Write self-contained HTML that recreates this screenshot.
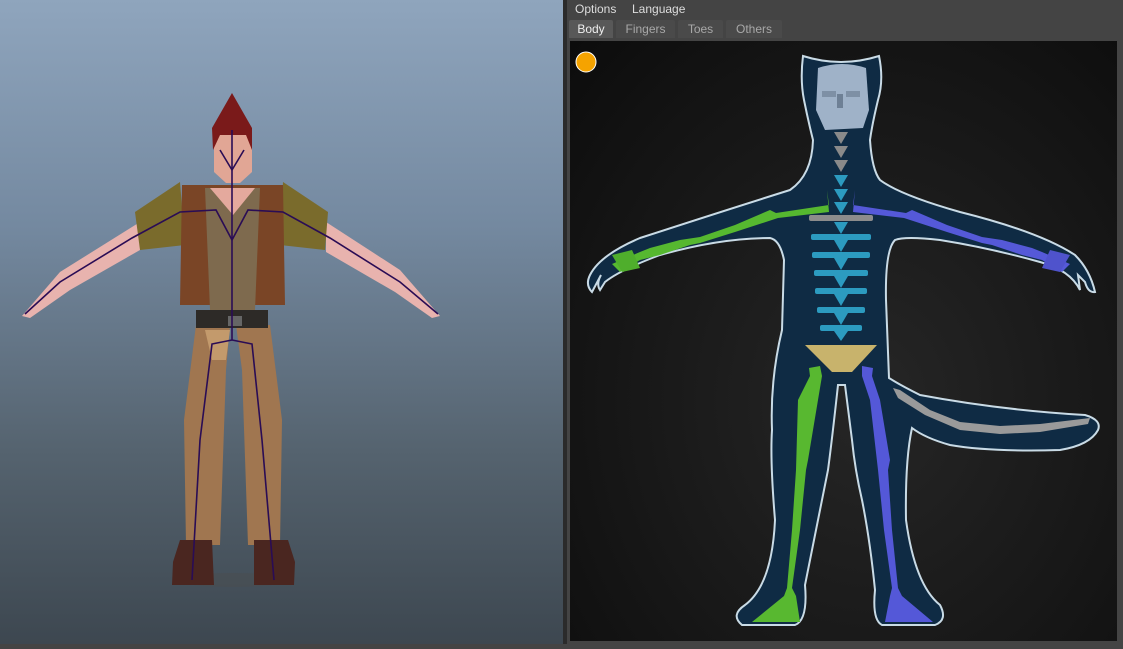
<!DOCTYPE html>
<html><head><style>
html,body{margin:0;padding:0;width:1123px;height:644px;overflow:hidden;background:#444;font-family:"Liberation Sans",sans-serif;}
.left{position:absolute;left:0;top:0;width:563px;height:644px;background:linear-gradient(#8fa5bd 0%,#7489a0 35%,#55636f 70%,#3d4750 100%);}
.div{position:absolute;left:563px;top:0;width:4px;height:644px;background:#2b2b2b;}
.right{position:absolute;left:567px;top:0;width:556px;height:644px;background:#444;}
.menu{position:absolute;left:0;top:0;width:556px;height:18px;background:#444;color:#ddd;font-size:12px;}
.menu span{position:absolute;top:2px}
.tabs{position:absolute;top:20px;left:0;height:18px;width:556px;}
.tab{position:absolute;top:0;height:18px;background:#4a4a4a;color:#a8a8a8;font-size:12px;line-height:18px;text-align:center;border-radius:2px 2px 0 0}
.canvas{position:absolute;left:3px;top:41px;width:547px;height:600px;background:radial-gradient(ellipse at 55% 60%,#262626,#141414 70%,#0c0c0c 100%);}
</style></head><body>
<div class="left">
<svg width="563" height="644" viewBox="0 0 563 644">
<ellipse cx="233" cy="580" rx="55" ry="7" fill="#4a4e52" opacity=".6"/>
<path d="M140 222 L60 272 L22 316 L30 318 L70 290 L140 250Z" fill="#e8b3ae"/>
<path d="M326 222 L400 270 L440 316 L432 318 L395 292 L326 252Z" fill="#e8b3ae"/>
<path d="M180 182 L135 212 L140 250 L185 245Z" fill="#7a6b2c"/>
<path d="M283 182 L328 212 L325 250 L280 245Z" fill="#7a6b2c"/>
<path d="M196 325 L230 325 L226 370 L220 545 L186 545 L184 420Z" fill="#a07650"/>
<path d="M236 325 L270 325 L282 420 L280 545 L248 545 L242 370Z" fill="#a07650"/>
<path d="M205 330 L230 330 L226 360 L212 360Z" fill="#c39a6c"/>
<path d="M180 540 L212 540 L214 585 L172 585 L173 562Z" fill="#4a2620"/>
<path d="M254 540 L288 540 L295 562 L294 585 L254 585Z" fill="#4a2620"/>
<path d="M182 185 L283 185 L285 305 L180 305Z" fill="#7a4526"/>
<path d="M205 188 L260 188 L255 310 L210 310Z" fill="#7e6a4e"/>
<path d="M210 188 L233 215 L255 188Z" fill="#e4a99d"/>
<rect x="196" y="310" width="72" height="18" fill="#2d2a27"/>
<rect x="228" y="316" width="14" height="10" fill="#666"/>
<path d="M214 130 L252 130 L252 172 L240 183 L226 183 L214 172Z" fill="#e1a695"/>
<path d="M232 93 L252 128 L252 150 L246 135 L220 135 L213 150 L212 128Z" fill="#7a1a1a"/>
<g stroke="#2a0c55" stroke-width="1.6" fill="none">
<path d="M232 130 L232 340"/><path d="M220 150 L232 170 L244 150"/>
<path d="M232 240 L216 210 L180 212 L132 238 L60 282 L25 314"/>
<path d="M232 240 L248 210 L283 212 L330 238 L400 282 L438 314"/>
<path d="M232 340 L212 344 L200 440 L192 580"/><path d="M232 340 L252 344 L262 440 L274 580"/>
</g>
</svg>
</div>
<div class="div"></div>
<div class="right">
<div class="menu"><span style="left:8px">Options</span><span style="left:65px">Language</span></div>
<div class="tabs">
<div class="tab" style="left:2px;width:44px;background:#585858;color:#eee">Body</div>
<div class="tab" style="left:49px;width:59px">Fingers</div>
<div class="tab" style="left:111px;width:45px">Toes</div>
<div class="tab" style="left:159px;width:56px">Others</div>
</div>
<div class="canvas"></div>
<svg style="position:absolute;left:0;top:0" width="556" height="644" viewBox="567 0 556 644">
<circle cx="586" cy="62" r="10" fill="#f5a300" stroke="#fff" stroke-width="1"/>
<path d="M803 56 Q841 68 879 56 Q884 80 878 100 Q872 125 870 140 Q872 170 880 180 Q900 195 960 212 Q1040 232 1075 255 Q1090 270 1095 292 Q1088 293 1085 282 L1078 275 L1080 290 Q1070 270 1040 262 Q990 248 940 240 Q905 236 895 240 Q885 250 886 300 L889 378 Q900 385 920 395 Q1000 410 1085 415 Q1102 420 1098 430 Q1090 445 1060 450 Q990 452 950 445 Q925 438 912 428 Q905 460 906 520 Q915 585 940 605 Q948 620 935 625 L882 625 Q872 620 875 590 Q870 540 862 500 Q855 470 852 440 L845 385 L838 385 Q832 440 828 470 Q818 520 805 585 Q808 620 795 625 L742 625 Q730 615 745 605 Q772 585 775 520 Q770 460 772 430 Q770 380 782 330 L784 260 Q780 240 770 238 Q720 238 660 255 Q620 270 605 282 L600 290 Q596 284 601 275 L592 292 Q585 285 590 275 Q600 255 640 238 Q720 212 790 190 Q812 175 813 140 Q808 120 804 100 Q800 80 803 56Z" fill="#0f2b44" stroke="#c9dbe6" stroke-width="2"/>
<path d="M818 68 Q842 60 866 68 L869 110 L863 128 L825 130 L816 110Z" fill="#9fb2c8"/>
<rect x="822" y="91" width="14" height="6" fill="#7e90a5"/><rect x="846" y="91" width="14" height="6" fill="#7e90a5"/><rect x="837" y="94" width="6" height="14" fill="#6e8095"/>
<g fill="#8a8a8a"><path d="M834 132h14l-7 12z"/><path d="M834 146h14l-7 12z"/><path d="M834 160h14l-7 12z"/></g>
<g fill="#2c9bc0"><path d="M834 175h14l-7 12z"/><path d="M834 189h14l-7 12z"/><path d="M834 202h14l-7 12z"/></g>
<rect x="809" y="215" width="64" height="6" rx="2" fill="#8c8c8c"/>
<g fill="#2c9bc0">
<rect x="811" y="234" width="60" height="6" rx="2"/><rect x="812" y="252" width="58" height="6" rx="2"/><rect x="814" y="270" width="54" height="6" rx="2"/><rect x="815" y="288" width="52" height="6" rx="2"/><rect x="817" y="307" width="48" height="6" rx="2"/><rect x="820" y="325" width="42" height="6" rx="2"/>
<path d="M834 222h14l-7 12zM834 240h14l-7 12zM834 258h14l-7 12zM834 276h14l-7 12zM834 294h14l-7 12zM834 313h14l-7 12zM834 331h14l-7 10z"/>
</g>
<path d="M805 345 L877 345 L852 372 L832 372Z" fill="#c8b36c"/>
<!-- green arm -->
<path d="M827 190 L829 205 L776 213 L770 210 L735 225 L700 237 L680 240 L650 248 L640 252 L612 264 L620 272 L640 260 L660 255 L690 245 L700 243 L735 232 L778 218 L829 212Z" fill="#56b830"/>
<path d="M612 255 L632 250 L640 268 L622 272Z" fill="#4fae2c"/>
<!-- blue arm -->
<path d="M855 190 L853 205 L906 213 L912 210 L947 225 L982 237 L1002 240 L1032 248 L1042 252 L1070 264 L1062 272 L1042 260 L1022 255 L992 245 L982 243 L947 232 L904 218 L853 212Z" fill="#5559d8"/>
<path d="M1070 255 L1050 250 L1042 268 L1060 272Z" fill="#4f53cc"/>
<!-- legs -->
<path d="M809 368 L820 366 L822 376 L818 400 L808 460 L806 470 L800 530 L792 588 L796 596 L800 622 L752 622 L784 596 L787 588 L792 530 L796 470 L798 400 L810 376Z" fill="#58b830"/>
<path d="M862 366 L873 368 L872 376 L880 400 L890 460 L888 470 L892 530 L898 588 L902 596 L933 622 L885 622 L890 596 L892 588 L884 530 L878 470 L870 400 L862 376Z" fill="#5458d8"/>
<!-- tail -->
<path d="M893 388 L898 398 L925 415 L960 430 L1000 434 L1040 432 L1088 424 L1090 418 L1040 424 L1000 426 L960 422 L930 410 L900 390Z" fill="#9a9a9a"/>
</svg>
</div>
</body></html>
